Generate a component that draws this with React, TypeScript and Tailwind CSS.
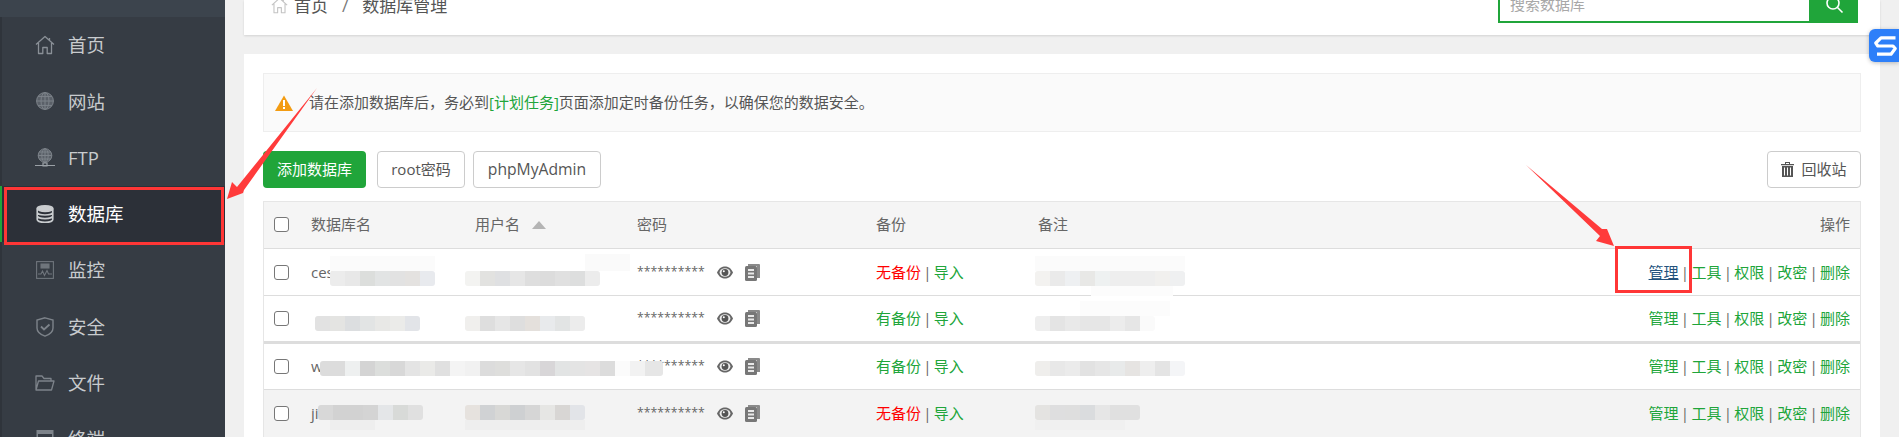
import React from "react";

const FONT = `font-['Open_Sans','Noto_Sans_CJK_SC',sans-serif]`;

const HomeI = ({ c = "#8a9097", s = 20 }: { c?: string; s?: number }) => (
  <svg width={s} height={s} viewBox="0 0 20 20" fill="none" stroke={c} strokeWidth="1.3">
    <path d="M1 9.500 10 1.500l9 8M3.500 8v10.500h4.300V12.500h4.400v6h4.300V8M14.500 3v2.500" strokeLinejoin="round" />
  </svg>
);
const Globe = ({ c = "#7d838a" }: { c?: string }) => (
  <svg width="18" height="18" viewBox="0 0 18 18" fill="none" stroke={c} strokeWidth="1">
    <circle cx="9" cy="9" r="8.400" fill="#5a6068" />
    <ellipse cx="9" cy="9" rx="4" ry="8.400" />
    <path d="M9 .6v16.800M.6 9h16.800M2 4.600h14M2 13.400h14" />
  </svg>
);
const Ftp = () => (
  <svg width="20" height="20" viewBox="0 0 20 20" fill="none" stroke="#7d838a" strokeWidth="1">
    <circle cx="10" cy="7.500" r="6.800" fill="#5a6068" />
    <ellipse cx="10" cy="7.500" rx="3.200" ry="6.800" />
    <path d="M10 .7v13.600M3.200 7.500h13.600M4 4h12M4 11h12" />
    <path d="M0 17.500h20M8 15h4v3H8z" stroke="#9aa0a6" strokeWidth="1.200" />
  </svg>
);
const Db = () => (
  <svg width="18" height="18" viewBox="0 0 18 18" fill="none" stroke="#c9cccf" strokeWidth="1.600">
    <ellipse cx="9" cy="3.600" rx="7.800" ry="2.800" fill="#c9cccf" />
    <path d="M1.200 3.600v10.800c0 1.600 3.500 2.800 7.800 2.800s7.800-1.200 7.800-2.800V3.600M1.200 7.200c0 1.600 3.500 2.800 7.800 2.800s7.800-1.200 7.800-2.800M1.200 10.800c0 1.600 3.500 2.800 7.800 2.800s7.800-1.200 7.800-2.800" />
  </svg>
);
const Monitor = () => (
  <svg width="18" height="18" viewBox="0 0 18 18" fill="none" stroke="#6f757c" strokeWidth="1.100">
    <rect x=".6" y=".6" width="16.800" height="16.800" />
    <rect x="5" y="3" width="8" height="4" fill="#6f757c" />
    <path d="M2 13h3l1.500-3 2 4.500L11 9.500l1.500 3.500H16" />
  </svg>
);
const Shield = () => (
  <svg width="18" height="20" viewBox="0 0 18 20" fill="none" stroke="#7d838a" strokeWidth="1.400">
    <path d="M9 .8 17 3v8c0 4-4 6.800-8 8.200C5 17.800 1 15 1 11V3z" />
    <path d="m5 9.500 3 3 5.500-5" strokeWidth="1.800" />
  </svg>
);
const Folder = () => (
  <svg width="20" height="16" viewBox="0 0 20 16" fill="none" stroke="#7d838a" strokeWidth="1.300">
    <path d="M1 15V1h6l2 2.500h7V6M1 15 3.500 6H19l-2.500 9z" strokeLinejoin="round" />
  </svg>
);
const Term = () => (
  <svg width="18" height="18" viewBox="0 0 18 18">
    <rect x=".5" y="0" width="17" height="18" fill="#7d838a" />
    <rect x="2" y="4" width="14" height="12" fill="#363c44" />
  </svg>
);
const Eye = () => (
  <svg width="16" height="13" viewBox="0 0 16 13">
    <path d="M0 6.500C2 2 5 .5 8 .5s6 1.500 8 6c-2 4.500-5 6-8 6s-6-1.500-8-6z" fill="#666" />
    <ellipse cx="8" cy="6.500" rx="5.400" ry="4.200" fill="#eee" />
    <circle cx="8" cy="6.500" r="3.400" fill="#555" />
    <circle cx="6.800" cy="5.200" r="1" fill="#fff" />
  </svg>
);
const Copy = () => (
  <svg width="15" height="17" viewBox="0 0 15 17">
    <path d="M3 0h11a1 1 0 0 1 1 1v13h-3V2H3z" fill="#8a8a8a" />
    <rect x="0" y="2" width="12" height="15" rx="1.500" fill="#777" />
    <path d="M3 5h6v2H3zM3 8.500h6v2H3zM3 12h6v2H3z" fill="#e8e8e8" />
  </svg>
);

const menu: [string, React.ReactNode, boolean?][] = [
  ["首页", <HomeI />],
  ["网站", <Globe />],
  ["FTP", <Ftp />],
  ["数据库", <Db />, true],
  ["监控", <Monitor />],
  ["安全", <Shield />],
  ["文件", <Folder />],
  ["终端", <Term />],
];

const Mosaic = ({ left, top, cells, first = 15, last = 15 }: { left: number; top: number; cells: string[]; first?: number; last?: number }) => (
  <div className="absolute flex h-[15px] overflow-hidden rounded-[3px]" style={{ left, top }}>
    {cells.map((c, i) => (
      <div
        key={i}
        className="h-full shrink-0"
        style={{ background: c, width: i === 0 ? first : i === cells.length - 1 ? last : 15 }}
      />
    ))}
  </div>
);

const Ghost = ({ left, top, w, h, c }: { left: number; top: number; w: number; h: number; c: string }) => (
  <div className="absolute" style={{ left, top, width: w, height: h, background: c }} />
);

type Row = {
  name: string;
  backup: string;
  ok: boolean;
  h: string;
  bg: string;
  border: string;
  active?: boolean;
  top: number;
  blocks: [number, string[], number?, number?][];
  ghosts: [number, number, number, number, string][];
};

const rows: Row[] = [
  {
    name: "ces", backup: "无备份", ok: false, h: "h-[47px]", bg: "bg-white", border: "border-b border-[#ddd]", active: true, top: 22,
    blocks: [
      [66, ["#ececec", "#e8e8e8", "#dcdedc", "#e2e4e4", "#e2e2e2", "#e4e2e0", "#e8eaee"]],
      [201, ["#f3f3f1", "#e2e2e0", "#dfe0e2", "#e6e6e6", "#dedede", "#dcdcdc", "#e0e0e0", "#dddede", "#ececec"]],
      [771, ["#f3f2f0", "#eaeaea", "#eef0f2", "#e8e8e6", "#eef1f1", "#eeeeee", "#eeeeee", "#eeeeee", "#f1f0ee", "#eff0f1"]],
    ],
    ghosts: [[66, 7, 105, 15, "#fbfbfb"], [321, 5, 45, 17, "#fafafa"], [771, 7, 150, 15, "#fbfbfb"], [827, 37, 82, 13, "#fcfcfc"]],
  },
  {
    name: "", backup: "有备份", ok: true, h: "h-[48px]", bg: "bg-white", border: "border-b-[3px] border-[#ddd]", top: 20,
    blocks: [
      [51, ["#e2e2e2", "#e4e4e2", "#dcdee0", "#e2e4e4", "#e8e8e6", "#ebebe9", "#e2e4e8"]],
      [201, ["#f0efed", "#dedede", "#e6e6e6", "#dedede", "#e4e0dc", "#e8eaec", "#e2e4e4", "#ececec"]],
      [771, ["#eeeeee", "#e4e4e4", "#e9e9e9", "#e6e6e6", "#e6e6e6", "#ececec", "#e6e6e6", "#fafafa"]],
    ],
    ghosts: [[816, 5, 90, 15, "#fcfcfc"]],
  },
  {
    name: "w", backup: "有备份", ok: true, h: "h-[46px]", bg: "bg-white", border: "border-b border-[#ddd]", top: 17,
    blocks: [
      [56, ["#dcdcdc", "#eef0f0", "#d4d4d4", "#dcdedc", "#d8d8d8", "#e4e4e4", "#eaeae8", "#e0e0e0", "#f4f4f4", "#f1f1f1", "#dcdcdc", "#dededc", "#e6e6e6", "#e2e2e2", "#d8d6d8", "#e2e4e4", "#e4e4e4", "#e6e4e4", "#dcdcdc", "#fbfbfb", "#f2f2f2", "#e6e6e6"], 25, 18],
      [771, ["#efeeec", "#e8e8e8", "#ebebeb", "#e2e2e2", "#e6e6e6", "#e8eaea", "#e6e4e2", "#eeeeee", "#e4e4e4", "#f4f5f7"]],
    ],
    ghosts: [],
  },
  {
    name: "ji", backup: "无备份", ok: false, h: "h-[47px]", bg: "bg-[#f3f3f3]", border: "", top: 15,
    blocks: [
      [54, ["#d8d8d8", "#d2d2d2", "#d2d2d2", "#d4d4d4", "#e4e6e8", "#d8dad8", "#e0e0e0"]],
      [201, ["#e6e2de", "#d0d2d4", "#d8d8d6", "#ced0d2", "#d6d6d6", "#e6e6e4", "#d8d6d4", "#e2e4e8"]],
      [771, ["#e4e3e1", "#dededf", "#dedede", "#dadcde", "#e6e6e6", "#e0e0e0", "#e0e0e0"]],
    ],
    ghosts: [[771, 30, 90, 10, "#f0f0f0"], [66, 30, 45, 10, "#eeeeee"], [201, 30, 120, 10, "#eeeeee"]],
  },
];

const Box = () => (
  <span className="block h-[15px] w-[15px] shrink-0 rounded-[3px] border border-[#777] bg-white" />
);

const Sep = () => <span className="mx-[2.300px] text-[#666]">|</span>;

function Ops({ active }: { active?: boolean }) {
  return (
    <span className="text-[15px] text-[#20a53a]">
      <span className={active ? "text-[#23527c] underline" : ""}>管理</span>
      <Sep />工具<Sep />权限<Sep />改密<Sep />删除
    </span>
  );
}

export default function App() {
  return (
    <div className={`relative flex h-[437px] w-[1899px] overflow-hidden bg-[#f0f0f0] ${FONT}`}>
      <aside className="flex w-[225px] shrink-0 flex-col bg-[#363c44]">
        <div className="h-[17px] shrink-0 bg-[#3c444d]" />
        {menu.map(([t, ic, on]) => (
          <div
            key={t}
            className={`flex h-[56.300px] shrink-0 items-center gap-[13px] border-l-2 pl-[33px] text-[18.500px] ${on ? "border-[#20a53a] bg-[#2c3038] text-white" : "border-[#2f343b] text-[#c8cbce]"}`}
          >
            <span className="flex w-[20px] justify-center">{ic}</span>
            <span>{t}</span>
          </div>
        ))}
      </aside>

      <main className="flex w-[1655px] shrink-0 flex-col gap-[19px] pl-[19px]">
        <div className="flex h-[35px] shrink-0 items-start justify-between bg-white pl-[27px] pr-[22px] shadow-[0_1px_2px_rgba(0,0,0,0.12)]">
          <div className="-mt-[7px] flex items-center gap-[6px] text-[17px] text-[#555]">
            <HomeI c="#c4c4c4" s={17} />
            <span>首页</span>
            <span className="mx-[8px] text-[#777]">/</span>
            <span>数据库管理</span>
          </div>
          <div className="-mt-[12px] flex h-[35px]">
            <div className="flex w-[311px] items-center border-2 border-r-0 border-t-0 border-[#20a53a] pl-[10px] text-[15px] text-[#a8a8a8]">
              搜索数据库
            </div>
            <div className="flex w-[49px] items-center justify-center bg-[#20a53a]">
              <svg width="20" height="20" viewBox="0 0 20 20" fill="none" stroke="#fff" strokeWidth="1.600" className="mt-[-2px]">
                <circle cx="9" cy="8" r="6" />
                <path d="m13.500 12.500 5 5" />
              </svg>
            </div>
          </div>
        </div>

        <section className="flex flex-1 flex-col bg-white px-[19px] pt-[19px]">
          <div className="flex h-[59px] shrink-0 items-center gap-[16px] border border-[#eee] bg-[#fafafa] pl-[11px] text-[15px] text-[#555]">
            <svg width="18" height="16" viewBox="0 0 18 16">
              <path d="M9 .5 18 16H0z" fill="#f39c12" />
              <path d="M8 5h2v6H8zM8 12h2v2H8z" fill="#fff" />
            </svg>
            <span>
              请在添加数据库后，务必到<span className="text-[#20a53a]">[计划任务]</span>页面添加定时备份任务，以确保您的数据安全。
            </span>
          </div>

          <div className="mt-[19px] flex h-[37px] shrink-0 justify-between">
            <div className="flex gap-[11px] text-[15px] text-[#555]">
              <button className="w-[103px] rounded-[4px] bg-[#20a53a] text-white">添加数据库</button>
              <button className="w-[88px] rounded-[4px] border border-[#ccc]">root密码</button>
              <button className="-ml-[3px] w-[128px] rounded-[4px] border border-[#ccc] text-[15.700px]">phpMyAdmin</button>
            </div>
            <button className="flex w-[94px] items-center justify-center gap-[7px] rounded-[4px] border border-[#ccc] text-[15px] text-[#555]">
              <svg width="13" height="15" viewBox="0 0 13 15" fill="#555">
                <path d="M0 2h13v1.300H0zM4 0h5v2H8V1H5v1H4zM1 4h11v11H1zm2 1.500v8h1v-8zm3 0v8h1v-8zm3 0v8h1v-8z" fillRule="evenodd" />
              </svg>
              回收站
            </button>
          </div>

          <div className="mt-[13px] shrink-0 border-x border-t border-[#e6e6e6] text-[15px] text-[#666]">
            <div className="flex h-[47px] items-center border-b border-[#ddd] bg-[#f5f5f5] pb-[1px] pl-[10px] pr-[10px]">
              <Box />
              <span className="ml-[22px] w-[164px]">数据库名</span>
              <span className="flex w-[162px] items-center gap-[12px]">
                用户名
                <span className="h-0 w-0 border-x-[7px] border-b-[8px] border-x-transparent border-b-[#b4b4b4]" />
              </span>
              <span className="w-[239px]">密码</span>
              <span className="w-[162px]">备份</span>
              <span>备注</span>
              <span className="ml-auto">操作</span>
            </div>
            {rows.map((r, i) => (
              <div key={i} className={`relative flex ${r.h} items-center pl-[10px] pr-[10px] ${r.bg} ${r.border}`}>
                <Box />
                <span className="ml-[22px] w-[326px]">{r.name}</span>
                <span className="flex w-[239px] items-center">
                  <span className="w-[80px] text-[12.300px] text-[#666]">**********</span>
                  <Eye />
                  <span className="ml-[12px]"><Copy /></span>
                </span>
                <span className="w-[162px]">
                  <span className={r.ok ? "text-[#20a53a]" : "text-[#f00]"}>{r.backup}</span>
                  <Sep />
                  <span className="text-[#20a53a]">导入</span>
                </span>
                <span className="flex-1" />
                <Ops active={r.active} />
                {r.ghosts.map(([l, t, w, h, c], j) => (
                  <Ghost key={j} left={l} top={t} w={w} h={h} c={c} />
                ))}
                {r.blocks.map(([l, c, f, la], j) => (
                  <Mosaic key={j} left={l} top={r.top} cells={c} first={f} last={la} />
                ))}
              </div>
            ))}
          </div>
        </section>
      </main>

      <div className="absolute left-[1869px] top-[29px] flex h-[33px] w-[30px] items-center justify-start rounded-l-[6px] bg-[#2d7ff9] pl-[5px] shadow-[0_1px_4px_rgba(0,0,0,0.25)]">
        <svg width="23" height="20" viewBox="0 0 23 20" fill="none" stroke="#fff" strokeWidth="3.200">
          <path d="M21.500 1.800H7L1.800 7l2 3h15.200L21.200 12.500 17 18.200H3" strokeLinejoin="round" />
        </svg>
      </div>

      <div className="pointer-events-none absolute left-[4px] top-[187px] h-[58px] w-[220px] border-[3px] border-[#ff3636]" />
      <div className="pointer-events-none absolute left-[1615px] top-[246px] h-[47px] w-[77px] border-[3px] border-[#ff3636]" />

      <svg className="pointer-events-none absolute left-0 top-0" width="1899" height="437">
        <path d="M227 199 232 182 237 187 317 88 244 190 243 193z" fill="#ff3b3b" />
        <path d="M1526 165 1602 229 1607 229 1614 246 1596 241 1600 236z" fill="#ff3b3b" />
      </svg>
    </div>
  );
}
